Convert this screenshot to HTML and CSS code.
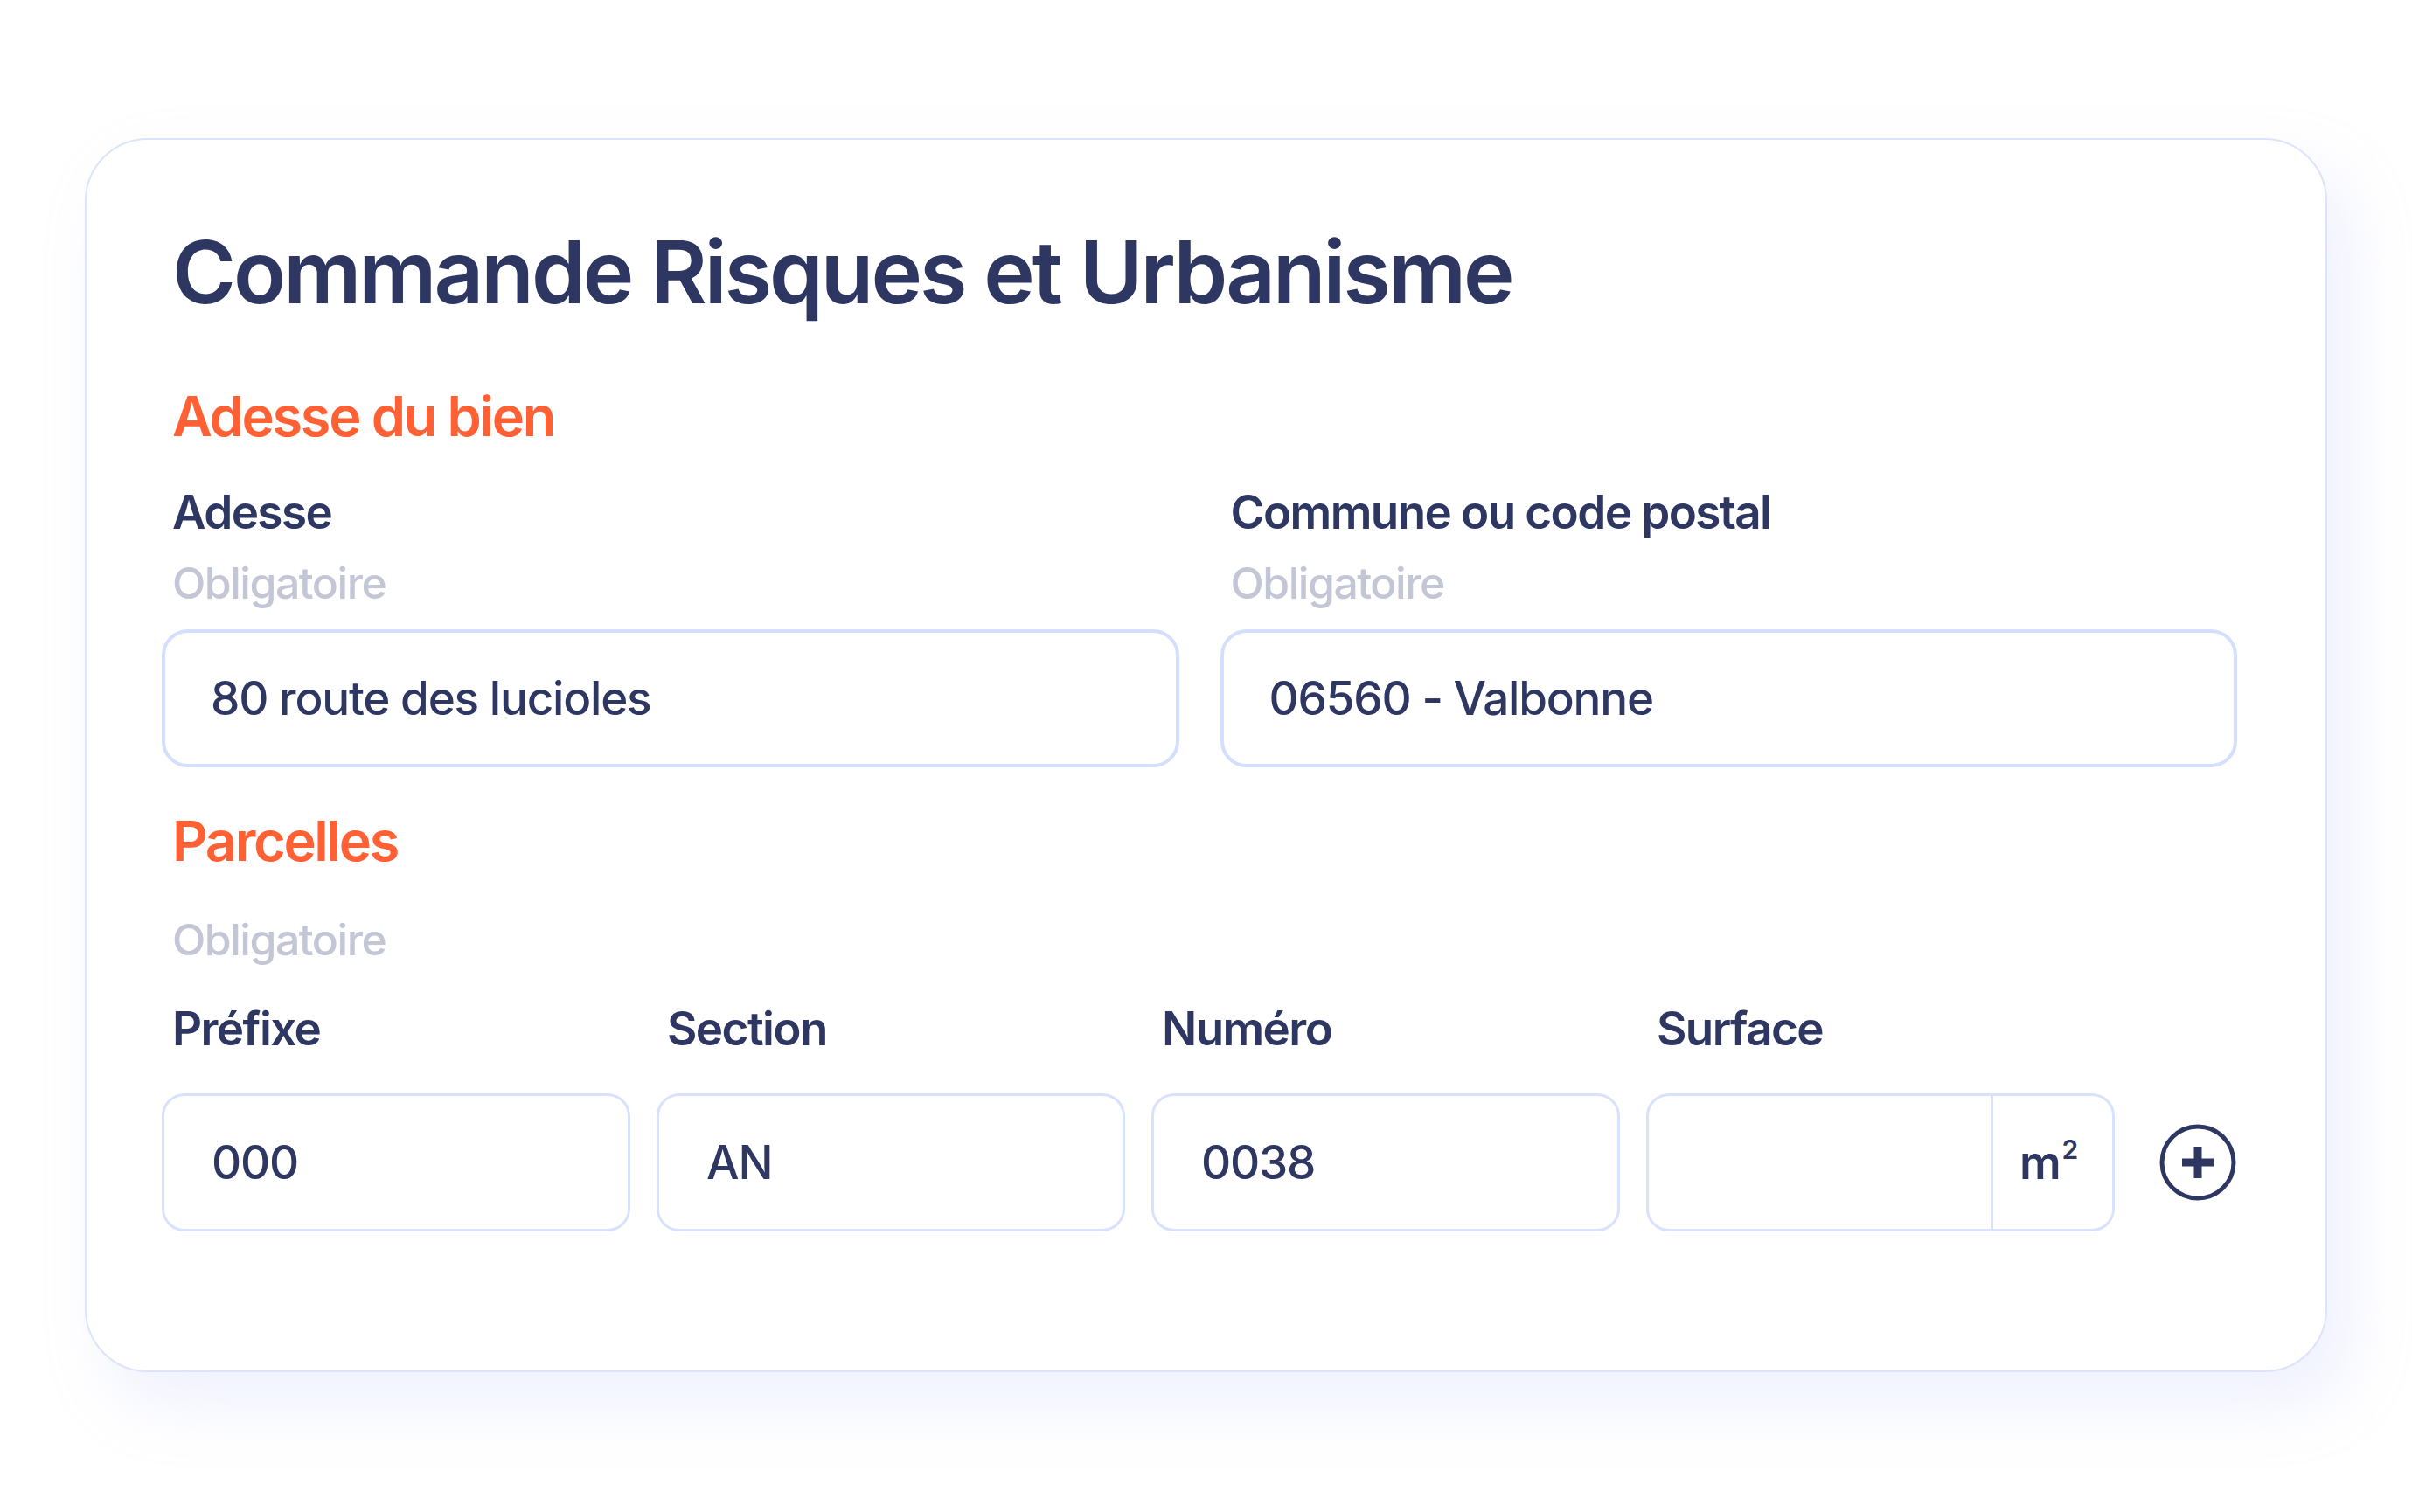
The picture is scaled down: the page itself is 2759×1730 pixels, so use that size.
FILE: index.html
```html
<!DOCTYPE html>
<html lang="fr">
<head>
<meta charset="utf-8">
<title>Commande Risques et Urbanisme</title>
<link rel="stylesheet" href="styles.css">
</head>
<body>
<div class="card">
  <h1 class="title">Commande Risques et Urbanisme</h1>
  <h2 class="section">Adesse du bien</h2>
  <div class="row2">
    <div class="field">
      <div class="label">Adesse</div>
      <div class="hint">Obligatoire</div>
      <div class="input big"><span class="value">80 route des lucioles</span></div>
    </div>
    <div class="field">
      <div class="label">Commune ou code postal</div>
      <div class="hint">Obligatoire</div>
      <div class="input big"><span class="value">06560 - Valbonne</span></div>
    </div>
  </div>
  <h2 class="section parcelles">Parcelles</h2>
  <div class="hint hint-solo">Obligatoire</div>
  <div class="row4">
    <div class="label">Préfixe</div>
    <div class="label">Section</div>
    <div class="label">Numéro</div>
    <div class="label">Surface</div>
    <div></div>
    <div class="input small"><span class="value">000</span></div>
    <div class="input small"><span class="value">AN</span></div>
    <div class="input small"><span class="value">0038</span></div>
    <div class="input small surface">
      <span class="surface-field"></span>
      <span class="unit">m<sup>2</sup></span>
    </div>
    <button class="add" type="button" aria-label="Ajouter">
      <svg viewBox="0 0 88 88" width="88" height="88">
        <circle cx="44" cy="44" r="41" fill="none" stroke="#2d3761" stroke-width="5"/>
        <path d="M44 26 V62 M26 44 H62" stroke="#2d3761" stroke-width="9" fill="none"/>
      </svg>
    </button>
  </div>
</div>
</body>
</html>
```

FILE: styles.css
```css
* { box-sizing: border-box; }

html, body {
  margin: 0;
  padding: 0;
  background: #ffffff;
}

body {
  width: 2759px;
  height: 1730px;
  overflow: hidden;
  font-family: "Inter", "Roboto", "Liberation Sans", sans-serif;
  color: #2d3761;
  padding-top: 158px;
  padding-left: 97px;
}

.card {
  width: 2565px;
  height: 1412px;
  border: 2px solid #dce4fb;
  border-radius: 72px;
  background: #ffffff;
  box-shadow: 26px 36px 70px rgba(190, 200, 250, 0.25);
  padding: 102px 101px 0 86px;
}

.title {
  margin: 0;
  padding-left: 12px;
  font-size: 99px;
  line-height: 99px;
  font-weight: 600;
  color: #2d3761;
  letter-spacing: -3px;
}

.section {
  margin: 82px 0 0 0;
  padding-left: 12px;
  font-size: 63px;
  line-height: 66px;
  font-weight: 600;
  color: #ff6134;
  letter-spacing: -2.3px;
}

.section.parcelles {
  margin-top: 51px;
}

.row2 {
  display: flex;
  gap: 47px;
  margin-top: 50px;
}

.field {
  flex: 1 1 0;
  display: flex;
  flex-direction: column;
}

.label {
  padding-left: 12px;
  font-size: 53px;
  line-height: 55px;
  font-weight: 600;
  color: #2d3761;
  letter-spacing: -1.6px;
}

.hint {
  padding-left: 12px;
  margin-top: 27px;
  font-size: 50px;
  line-height: 52px;
  font-weight: 500;
  color: #c3c6d5;
  letter-spacing: -1.5px;
}

.hint-solo {
  margin-top: 54px;
}

.input {
  display: flex;
  align-items: center;
  height: 158px;
  background: #ffffff;
  font-size: 53px;
  font-weight: 500;
  color: #2d3761;
  letter-spacing: -1.2px;
}

.input.big {
  margin-top: 27px;
  border: 4px solid #d4dffd;
  border-radius: 30px;
  padding-left: 52px;
}

.row4 {
  display: grid;
  grid-template-columns: 536px 536px 536px 536px 88px;
  column-gap: 30px;
  row-gap: 46px;
  margin-top: 49px;
  align-items: center;
}

.input.small {
  border: 3px solid #d8e2fc;
  border-radius: 26px;
  padding-left: 54px;
}

.input.surface {
  padding-left: 0;
  align-items: stretch;
}

.surface-field {
  flex: 1 1 auto;
  border-right: 3px solid #d8e2fc;
}

.unit {
  width: 136px;
  display: flex;
  align-items: center;
  padding-left: 30px;
  font-weight: 600;
}

.unit sup {
  font-size: 30px;
  line-height: 1;
  align-self: flex-start;
  margin-top: 46px;
  margin-left: 2px;
}

.add {
  margin: 0 0 0 21px;
  padding: 0;
  border: 0;
  background: transparent;
  width: 88px;
  height: 88px;
  display: block;
}

.add svg {
  display: block;
}
```
